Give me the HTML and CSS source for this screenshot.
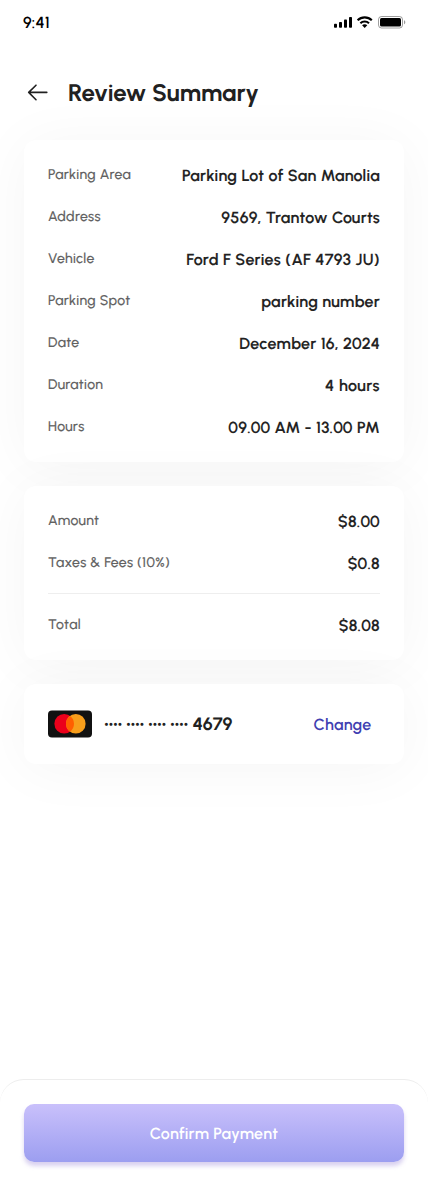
FILE: index.html
```html
<!DOCTYPE html>
<html lang="en">
<head>
<meta charset="utf-8">
<meta name="viewport" content="width=device-width, initial-scale=1">
<title>Review Summary</title>
<link rel="stylesheet" href="styles.css">
</head>
<body>
<div class="screen">
  <div class="status">
    <span class="time">9:41</span>
    <svg class="status-icons" width="72" height="14" viewBox="0 0 72 14">
      <g fill="#000">
        <rect x="0" y="8.7" width="3" height="4" rx=".8"/>
        <rect x="5" y="6.9" width="3" height="5.8" rx=".8"/>
        <rect x="10" y="4.5" width="3" height="8.2" rx=".8"/>
        <rect x="15" y="2" width="3" height="10.7" rx=".8"/>
        <path d="M30.7 9.2c1 0 1.9.35 2.6 1l-2.6 2.7-2.6-2.7c.7-.65 1.6-1 2.6-1z"/>
      </g>
      <g fill="none" stroke="#000" stroke-width="2.1">
        <path d="M26.4 8.2a6.200 6.200 0 0 1 8.600 0M23.600 5.300a10.200 10.200 0 0 1 14.200 0"/>
      </g>
      <rect x="44.500" y="1.500" width="24" height="11.500" rx="3" fill="none" stroke="#000" stroke-opacity=".38"/>
      <rect x="46" y="3" width="21" height="8.500" rx="1.500"/>
      <path d="M70 5.300v4c.8-.3 1.300-1.100 1.300-2s-.5-1.700-1.300-2z" fill-opacity=".4"/>
    </svg>
  </div>
  <header class="nav">
    <svg class="back" width="28" height="28" viewBox="0 0 28 28" fill="none" stroke="#212121" stroke-width="1.6" stroke-linecap="round" stroke-linejoin="round">
      <path d="M22.800 14.400H4.700M12 7.200L4.700 14.400l7.300 7.300"/>
    </svg>
    <h1 class="title">Review Summary</h1>
  </header>
  <main class="cards">
    <section class="card">
      <div class="row"><span class="label">Parking Area</span><span class="value">Parking Lot of San Manolia</span></div>
      <div class="row"><span class="label">Address</span><span class="value">9569, Trantow Courts</span></div>
      <div class="row"><span class="label">Vehicle</span><span class="value vehicle">Ford F Series (AF 4793 JU)</span></div>
      <div class="row"><span class="label">Parking Spot</span><span class="value">parking number</span></div>
      <div class="row"><span class="label">Date</span><span class="value">December 16, 2024</span></div>
      <div class="row"><span class="label">Duration</span><span class="value duration">4 hours</span></div>
      <div class="row"><span class="label">Hours</span><span class="value">09.00 AM - 13.00 PM</span></div>
    </section>
    <section class="card">
      <div class="row"><span class="label">Amount</span><span class="value">$8.00</span></div>
      <div class="row"><span class="label">Taxes &amp; Fees (10%)</span><span class="value">$0.8</span></div>
      <div class="divider"></div>
      <div class="row"><span class="label">Total</span><span class="value">$8.08</span></div>
    </section>
    <section class="card payment">
      <svg width="44" height="28" viewBox="0 0 44 28">
        <rect y=".5" width="44" height="27" rx="4" fill="#111"/>
        <circle cx="16.200" cy="13.800" r="9.800" fill="#eb001b"/>
        <circle cx="27.800" cy="13.800" r="9.800" fill="#f79e1b"/>
        <path d="M22 5.900a9.800 9.800 0 0 1 0 15.800a9.800 9.800 0 0 1 0-15.800z" fill="#ff5f00"/>
      </svg>
      <span class="dots"><span class="dot-group">••••</span><span class="dot-group">••••</span><span class="dot-group">••••</span><span class="dot-group">••••</span></span>
      <span class="digits">4679</span>
      <span class="change">Change</span>
    </section>
  </main>
  <footer class="footer">
    <button class="confirm">Confirm Payment</button>
  </footer>
</div>
</body>
</html>
```
FILE: styles.css
```css
* { box-sizing: border-box; }
body { margin: 0; background: #fff; font-family: Urbanist, Lato, "Open Sans", sans-serif; color: #212121; text-rendering: geometricPrecision; }
.screen { width: 428px; height: 1198px; display: flex; flex-direction: column; overflow: hidden; }
.status { height: 44px; padding: 0 23px; display: flex; justify-content: space-between; align-items: center; }
.time { font-size: 16px; font-weight: 600; letter-spacing: .2px; color: #000; }
.status-icons { margin-right: -1px; }
.nav { height: 96px; padding: 0 24px; display: flex; align-items: center; gap: 16px; }
.title { margin: 0; padding-top: 2px; font-size: 24px; font-weight: 700; line-height: 30px; white-space: nowrap; }
.cards { flex: 1; padding: 0 24px; display: flex; flex-direction: column; gap: 24px; }
.card { padding: 24px; display: flex; flex-direction: column; gap: 20px; border-radius: 12px; background: #fff; box-shadow: 0 4px 60px rgba(0, 0, 0, .042); }
.row { height: 22px; display: flex; justify-content: space-between; align-items: flex-start; white-space: nowrap; }
.label { font-size: 14px; line-height: 22px; font-weight: 500; letter-spacing: .36px; color: #616161; -webkit-text-stroke: .15px #616161; }
.value { font-size: 16px; line-height: 24px; font-weight: 600; letter-spacing: .29px; -webkit-text-stroke: .15px #212121; }
.vehicle { letter-spacing: .37px; }
.duration { letter-spacing: .5px; }
.divider { height: 1px; margin-top: -1px; background: #eee; }
.payment { height: 80px; padding: 0 24px; flex-direction: row; align-items: center; gap: 0; }
.dots { display: flex; margin-left: 12.4px; padding-top: 2px; }
.dot-group { width: 22px; font-family: "Liberation Sans", sans-serif; font-size: 11px; line-height: 20px; letter-spacing: .65px; }
.digits { font-size: 18px; font-weight: 700; line-height: 22px; }
.change { margin-left: auto; margin-right: 8.5px; padding-top: 2px; font-size: 16px; line-height: 22px; font-weight: 600; letter-spacing: .25px; color: #413fb1; }
.footer { height: 119px; padding: 24px 24px 36px; border: 1px solid #ededed; border-radius: 24px 24px 0 0; border-width: 1px 0 0; background: #fff; }
.confirm { width: 100%; height: 58px; padding: 2px 0 0; border: 0; border-radius: 10px; font: 600 16px/22px Urbanist, Lato, sans-serif; letter-spacing: .26px; text-rendering: geometricPrecision; color: #fff; background: linear-gradient(#c9c0fb, #9c9ef0); box-shadow: 0 4px 4px rgba(171, 153, 222, .45); }
```
